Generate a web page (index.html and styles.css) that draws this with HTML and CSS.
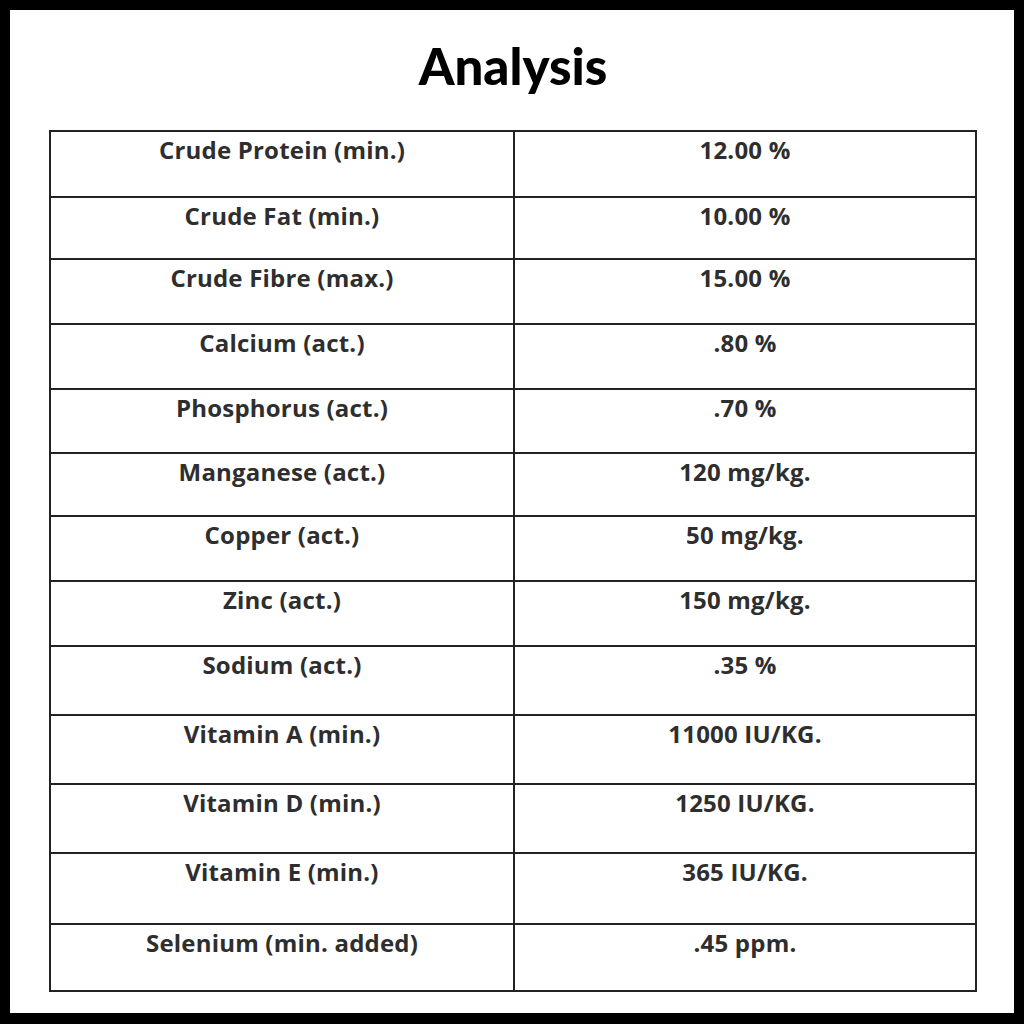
FILE: index.html
```html
<!DOCTYPE html>
<html>
<head>
<meta charset="utf-8">
<link rel="stylesheet" href="styles.css">
</head>
<body>
<div class="frame">
  <h1 class="title">Analysis</h1>
  <table class="analysis">
    <tr class="r1"><td>Crude Protein (min.)</td><td>12.00 %</td></tr>
    <tr class="r2"><td>Crude Fat (min.)</td><td>10.00 %</td></tr>
    <tr class="r3"><td>Crude Fibre (max.)</td><td>15.00 %</td></tr>
    <tr class="r4"><td>Calcium (act.)</td><td>.80 %</td></tr>
    <tr class="r5"><td>Phosphorus (act.)</td><td>.70 %</td></tr>
    <tr class="r6"><td>Manganese (act.)</td><td>120 mg/kg.</td></tr>
    <tr class="r7"><td>Copper (act.)</td><td>50 mg/kg.</td></tr>
    <tr class="r8"><td>Zinc (act.)</td><td>150 mg/kg.</td></tr>
    <tr class="r9"><td>Sodium (act.)</td><td>.35 %</td></tr>
    <tr class="r10"><td>Vitamin A (min.)</td><td>11000 IU/KG.</td></tr>
    <tr class="r11"><td>Vitamin D (min.)</td><td>1250 IU/KG.</td></tr>
    <tr class="r12"><td>Vitamin E (min.)</td><td>365 IU/KG.</td></tr>
    <tr class="r13"><td>Selenium (min. added)</td><td>.45 ppm.</td></tr>
  </table>
</div>
</body>
</html>
```
FILE: styles.css
```css
html, body {
  margin: 0;
  padding: 0;
  background: #000;
}
.frame {
  width: 1024px;
  height: 1024px;
  box-sizing: border-box;
  border: 10px solid #000;
  border-bottom-width: 11px;
  background: #fff;
  padding: 0 37px 0 39px;
  font-family: "Open Sans", Lato, sans-serif;
}
.title {
  margin: 0;
  height: 120px;
  padding-top: 24px;
  box-sizing: border-box;
  text-align: center;
  font-family: Lato, sans-serif;
  font-size: 51px;
  line-height: 64px;
  font-weight: 900;
  color: #000;
}
.analysis {
  width: 928px;
  border-collapse: collapse;
  table-layout: fixed;
  border: 2px solid #222;
}
.analysis td {
  border: 2px solid #222;
  text-align: center;
  vertical-align: top;
  padding: 3px 0 0 0;
  font-size: 24px;
  line-height: 30px;
  font-weight: 700;
  letter-spacing: 0.2px;
  color: #2e2e2e;
  box-sizing: content-box;
}
.analysis td:first-child { width: 462px; }
.r1 td { height: 61px; }
.r2 td { height: 57px; }
.r3 td { height: 60px; }
.r4 td { height: 60px; }
.r5 td { height: 59px; }
.r6 td { height: 58px; }
.r7 td { height: 60px; }
.r8 td { height: 60px; }
.r9 td { height: 64px; }
.r10 td { height: 64px; }
.r11 td { height: 64px; }
.r12 td { height: 66px; }
.r13 td { height: 62px; }
```
